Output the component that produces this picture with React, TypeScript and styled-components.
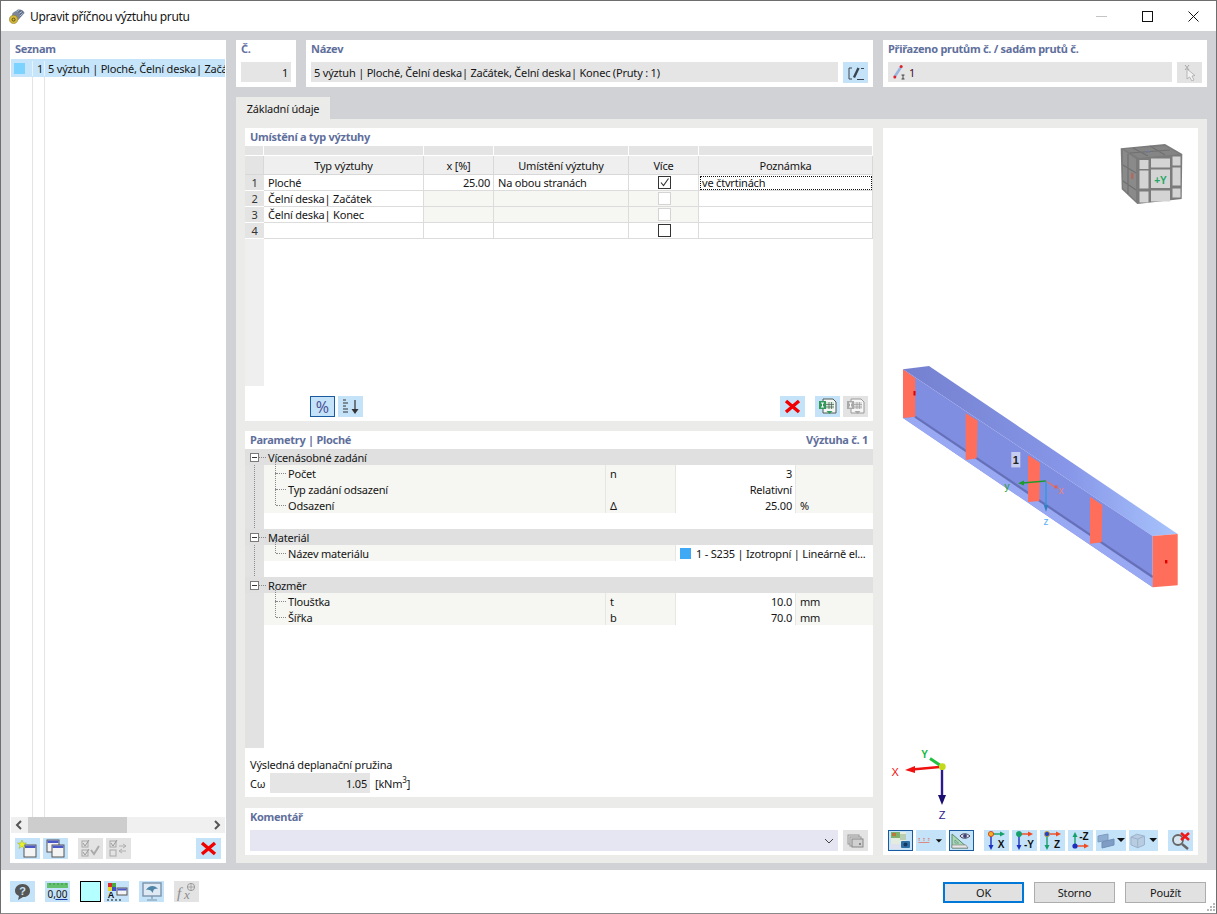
import { ReactNode } from 'react';
import styled, { createGlobalStyle } from 'styled-components';

const GlobalStyle = createGlobalStyle`
  html, body { margin: 0; padding: 0; background: #fff; }
  body { font-family: "Noto Sans", "Open Sans", sans-serif; font-size: 11px; letter-spacing: -0.2px; color: #151515; }
  * { box-sizing: border-box; }
`;

const Window = styled.div`
  width: 1217px;
  height: 914px;
  border: 1px solid #6e6e6e;
  border-bottom-color: #8a8a8a;
  display: flex;
  flex-direction: column;
  background: #fff;
  overflow: hidden;
`;
const TitleBar = styled.div`
  height: 30px;
  flex: none;
  display: flex;
  align-items: center;
  padding-left: 8px;
  gap: 5px;
  font-size: 12px;
  letter-spacing: -0.35px;
`;
const WinControls = styled.div`
  margin-left: auto;
  display: flex;
`;
const WinButton = styled.div`
  width: 46px;
  height: 30px;
  display: flex;
  align-items: center;
  justify-content: center;
`;
const Body = styled.div`
  flex: 1;
  min-height: 0;
  background: #d1d2d5;
  padding: 9px 9px 7px 9px;
  display: grid;
  grid-template-columns: 216px 971px;
  gap: 10px;
`;
const Card = styled.div<{ $w?: number; $h?: number }>`
  background: #fff;
  ${p => (p.$w ? `width: ${p.$w}px;` : '')}
  ${p => (p.$h ? `height: ${p.$h}px;` : '')}
  flex: none;
`;
const ListPanel = styled(Card)`
  display: flex;
  flex-direction: column;
`;
const SectionTitle = styled.div<{ $h?: number }>`
  height: ${p => p.$h ?? 18}px;
  padding: 0 5px 2px;
  display: flex;
  align-items: center;
  justify-content: space-between;
  color: #5f6f9c;
  font-weight: 700;
  font-size: 11px;
  letter-spacing: -0.28px;
`;
const List = styled.div`
  flex: 1;
  margin: 0 1px;
  background-image: linear-gradient(#e4e4e4, #e4e4e4), linear-gradient(#e4e4e4, #e4e4e4);
  background-size: 1px 100%, 1px 100%;
  background-position: 21px 0, 33px 0;
  background-repeat: no-repeat;
`;
const ListRow = styled.div`
  height: 18px;
  background: #c6e5fa;
  display: grid;
  grid-template-columns: 21px 12px 1fr;
  align-items: center;
  white-space: nowrap;
  overflow: hidden;
`;
const ListSwatch = styled.span`
  width: 11px;
  height: 11px;
  background: #7dd3ff;
  margin-left: 3px;
`;
const ListNo = styled.span`
  text-align: right;
  padding-right: 1px;
  border-left: 1px solid #e8f3fb;
`;
const ListText = styled.span`
  padding-left: 3px;
  border-left: 1px solid #e8f3fb;
  overflow: hidden;
`;
const ScrollBar = styled.div`
  height: 16px;
  margin: 0 1px;
  background: #f0f0f0;
  display: flex;
  align-items: center;
  justify-content: space-between;
  padding: 0 4px;
  position: relative;
`;
const ScrollThumb = styled.div`
  position: absolute;
  left: 17px;
  top: 0;
  width: 99px;
  height: 16px;
  background: #cdcdcd;
`;
const ListTools = styled.div`
  height: 30px;
  flex: none;
  padding: 5px 5px 0;
  display: flex;
  gap: 3px;
`;
const Main = styled.div`
  display: flex;
  flex-direction: column;
  min-height: 0;
`;
const TopRow = styled.div`
  display: flex;
  gap: 10px;
  height: 47px;
  flex: none;
`;
const FieldRow = styled.div`
  display: flex;
  padding: 4px 5px 0;
  gap: 5px;
`;
const ReadOnly = styled.div<{ $right?: boolean; $w?: number }>`
  height: 20px;
  flex: ${p => (p.$w ? 'none' : '1')};
  ${p => (p.$w ? `width: ${p.$w}px;` : '')}
  background: #e5e5e5;
  display: flex;
  align-items: center;
  justify-content: ${p => (p.$right ? 'flex-end' : 'flex-start')};
  padding: 0 3px;
  white-space: nowrap;
`;
const FieldIcon = styled.span`
  display: flex;
  margin: 0 4px 0 2px;
`;
const Maroon = styled.span`
  color: #4d0a2c;
`;
const Tab = styled.div`
  margin-top: 10px;
  width: 94px;
  height: 22px;
  flex: none;
  background: #ebebe9;
  display: flex;
  align-items: center;
  justify-content: center;
`;
const TabPanel = styled.div`
  flex: 1;
  min-height: 0;
  background: #ebebe9;
  padding: 9px 9px 8px;
  display: grid;
  grid-template-columns: 628px 315px;
  gap: 10px;
`;
const FormColumn = styled.div`
  display: flex;
  flex-direction: column;
`;
const TableRow = styled.div<{ $h: number }>`
  display: grid;
  grid-template-columns: 19px 160px 70px 135px 70px 174px;
  height: ${p => p.$h}px;
`;
const TopCell = styled.div`
  background: #e4e4e4;
  border-right: 1px solid #fff;
  margin-bottom: 1px;
`;
const HeadCell = styled.div<{ $corner?: boolean }>`
  background: ${p => (p.$corner ? '#e4e4e4' : '#efefef')};
  border-right: 1px solid #d8d8d8;
  border-bottom: 1px solid #d8d8d8;
  display: flex;
  align-items: center;
  justify-content: center;
`;
const RowHead = styled.div`
  background: #e4e4e4;
  border-bottom: 1px solid #fff;
  display: flex;
  align-items: center;
  justify-content: center;
  font-size: 11px;
  color: #333;
`;
const Cell = styled.div<{ $right?: boolean; $tint?: boolean; $center?: boolean }>`
  background: ${p => (p.$tint ? '#f6f7f2' : '#fff')};
  border-right: 1px solid #dcdcdc;
  border-bottom: 1px solid #dcdcdc;
  display: flex;
  align-items: center;
  justify-content: ${p => (p.$right ? 'flex-end' : p.$center ? 'center' : 'flex-start')};
  padding: 0 3px 0 4px;
  white-space: nowrap;
`;
const FocusCell = styled(Cell)`
  outline: 1px dotted #111;
  outline-offset: -2px;
  padding-left: 3px;
`;
const Check = styled.span<{ $disabled?: boolean }>`
  width: 13px;
  height: 13px;
  border: 1px solid ${p => (p.$disabled ? '#d4d4d4' : '#333')};
  background: #fff;
  display: flex;
  align-items: center;
  justify-content: center;
`;
const TableFiller = styled.div`
  width: 19px;
  height: 147px;
  background: #efefef;
`;
const TableTools = styled.div`
  display: flex;
  gap: 3px;
  padding: 10px 5px 0 65px;
`;
const Tree = styled.div`
  height: 299px;
  background: linear-gradient(to right, #e2e2e2 19px, transparent 19px);
  position: relative;
`;
const TreeSpine = styled.div<{ $top: number; $h: number }>`
  position: absolute;
  left: 9px;
  top: ${p => p.$top}px;
  height: ${p => p.$h}px;
  border-left: 1px dotted #8a8a8a;
`;
const GroupRow = styled.div`
  height: 16px;
  background: #e0e0e0;
  display: flex;
  align-items: center;
  padding-left: 5px;
  position: relative;
`;
const Expander = styled.span`
  width: 9px;
  height: 9px;
  border: 1px solid #7a7a7a;
  background: #fff;
  position: relative;
  margin-right: 9px;
  &::before {
    content: '';
    position: absolute;
    left: 1px;
    right: 1px;
    top: 3px;
    border-top: 1px solid #333;
  }
  &::after {
    content: '';
    position: absolute;
    left: 8px;
    width: 7px;
    top: 3px;
    border-top: 1px dotted #8a8a8a;
  }
`;
const ParamRow = styled.div`
  height: 16px;
  margin-left: 19px;
  display: grid;
  grid-template-columns: 341px 70px 120px 78px;
`;
const ParamLabel = styled.div`
  background: #f6f7f2;
  padding-left: 24px;
  position: relative;
  display: flex;
  align-items: center;
  &::before {
    content: '';
    position: absolute;
    left: 12px;
    width: 10px;
    top: 8px;
    border-top: 1px dotted #8a8a8a;
  }
  &::after {
    content: '';
    position: absolute;
    left: 11px;
    top: -8px;
    height: 16px;
    border-left: 1px dotted #8a8a8a;
  }
`;
const ParamCell = styled.div<{ $right?: boolean; $white?: boolean; $span?: number; $plain?: boolean }>`
  background: ${p => (p.$white ? '#fff' : '#f6f7f2')};
  border-left: ${p => (p.$plain ? '0' : '1px solid #e6e6e2')};
  display: flex;
  align-items: center;
  justify-content: ${p => (p.$right ? 'flex-end' : 'flex-start')};
  padding: 0 3px 0 4px;
  white-space: nowrap;
  overflow: hidden;
  ${p => (p.$span ? `grid-column: span ${p.$span};` : '')}
`;
const MaterialSwatch = styled.span`
  width: 11px;
  height: 11px;
  background: #3fa9f5;
  margin-right: 5px;
  flex: none;
`;
const TreeBlank = styled.div`
  height: 16px;
`;
const ResultBlock = styled.div`
  padding: 9px 5px 0;
`;
const ResultRow = styled.div`
  display: flex;
  align-items: center;
  margin-top: 1px;
  height: 20px;
`;
const ResultSymbol = styled.span`
  width: 20px;
`;
const Unit = styled.span`
  margin-left: 5px;
  sup { font-size: 8px; line-height: 0; }
`;
const CommentRow = styled.div`
  display: flex;
  gap: 5px;
  padding: 4px 5px 0;
`;
const Combo = styled.div`
  flex: 1;
  height: 21px;
  background: #e6e6f2;
  display: flex;
  align-items: center;
  justify-content: flex-end;
  padding-right: 4px;
`;
const PreviewCard = styled(Card)`
  display: flex;
  flex-direction: column;
`;
const Scene = styled.svg`
  display: block;
  width: 315px;
  height: 702px;
  flex: none;
`;
const PreviewTools = styled.div`
  display: flex;
  gap: 3px;
  padding: 0 5px;
`;
const Footer = styled.div`
  height: 43px;
  flex: none;
  display: flex;
  padding: 11px 10px 0 9px;
  position: relative;
`;
const FooterTools = styled.div`
  display: flex;
  gap: 10px;
`;
const DialogButtons = styled.div`
  margin-left: auto;
  display: flex;
  gap: 10px;
  padding-top: 1px;
`;
const DialogButton = styled.button<{ $primary?: boolean }>`
  width: 81px;
  height: 21px;
  padding: 0;
  font: inherit;
  letter-spacing: inherit;
  color: #151515;
  background: #e1e1e1;
  border: ${p => (p.$primary ? '2px solid #0078d7' : '1px solid #adadad')};
`;
const ColorBox = styled.div`
  width: 21px;
  height: 21px;
  border: 1px solid #000;
  background: #b4ffff;
  margin-right: -7px;
`;
const Grip = styled.svg`
  position: absolute;
  right: 1px;
  bottom: 1px;
`;
const ToolBtn = styled.button<{ $w?: number; $state?: 'on' | 'off' | 'active'; $gap?: number }>`
  width: ${p => p.$w ?? 25}px;
  height: 21px;
  flex: none;
  padding: 0;
  margin-left: ${p => p.$gap ?? 0}px;
  border: ${p => (p.$state === 'active' ? '1px solid #1a5a9e' : '0')};
  background: ${p => (p.$state === 'off' ? '#e3e3e3' : '#c5e3f8')};
  display: flex;
  align-items: center;
  justify-content: center;
  font-family: inherit;
`;
const PercentBtn = styled(ToolBtn)`
  font-size: 16px;
  line-height: 1;
  color: #50559a;
  letter-spacing: 0;
`;

const Svg = ({ children, w = 19, h = 17 }: { children: ReactNode; w?: number; h?: number }) => (
  <svg width={w} height={h} viewBox={`0 0 ${w} ${h}`}>
    {children}
  </svg>
);

const Caret = () => <polygon points="0,0 8,0 4,4" fill="#111" />;

const RedX = () => (
  <Svg>
    <path d="M3 3 L16 14 M16 3 L3 14" stroke="#f00000" strokeWidth="3.4" />
  </Svg>
);
const TitleIcon = () => (
  <Svg w={16} h={15}>
    <path d="M3 5 L9 0.5 C12 0 15 2 15.5 4 L10 10 Z" fill="#5d6d88" />
    <path d="M5 4.5 L10.5 1 M7 6.5 L13 2.5 M9 8.5 L14.5 4" stroke="#c4ced9" strokeWidth="0.9" />
    <ellipse cx="7" cy="7" rx="4" ry="4.6" fill="#7c8698" />
    <circle cx="4.6" cy="10.4" r="4.2" fill="#d6b93a" stroke="#8c7a2a" strokeWidth="0.6" />
    <circle cx="4.6" cy="10.6" r="1.5" fill="none" stroke="#5a4d18" strokeWidth="1" />
  </Svg>
);
const EditIcon = () => (
  <Svg>
    <path d="M6 4 H3 V15 H6" fill="none" stroke="#3a4450" strokeWidth="1" />
    <path d="M8 13.5 L12.5 4" stroke="#3a4450" strokeWidth="2.4" />
    <path d="M11 15.5 H18 M15 4.5 H18" stroke="#3a4450" strokeWidth="1" />
  </Svg>
);
const MemberIcon = () => (
  <Svg w={12} h={16}>
    <path d="M1.5 13 L8 3" stroke="#9ab4e0" strokeWidth="2.6" />
    <circle cx="1.8" cy="13" r="1.5" fill="#e0202a" />
    <circle cx="8.2" cy="2.6" r="1.5" fill="#e0202a" />
    <path d="M8.5 11 H11.5 M10 11 V15 M8.5 15 H11.5" stroke="#222" strokeWidth="0.8" />
  </Svg>
);
const PickIcon = () => (
  <Svg>
    <path d="M5 1 L9 6 M9 1 L5 6" stroke="#a8a8a8" strokeWidth="1" />
    <path d="M7 5 L7 15 L9.5 13 L12 17 L14 16 L12 12 L15 11.5 Z" fill="#f2f2f2" stroke="#aaa" strokeWidth="0.8" />
  </Svg>
);
const SortIcon = () => (
  <Svg>
    <path d="M2 2 H5 M2 5 H7 M2 8 H5 M2 11 H7 M2 14 H7" stroke="#333" strokeWidth="1" />
    <path d="M14 2 V12" stroke="#333" strokeWidth="1.2" />
    <polygon points="10.5,11 17.5,11 14,16" fill="#333" />
  </Svg>
);
const SheetIcon = ({ off }: { off?: boolean }) => {
  const edge = off ? '#9a9a9a' : '#4e5a52';
  const tab = off ? '#a8a8a8' : '#2f9a5a';
  return (
    <Svg>
      <path d="M5 1 H15 L18 4 V15 H5 Z" fill="#f6f6f6" stroke={edge} />
      <rect x="8" y="4" width="8" height="7" fill={off ? '#ddd' : '#cfe8d6'} />
      <path d="M8 6.5 H16 M8 9 H16 M11 4 V11 M13.5 4 V11" stroke={edge} strokeWidth="0.7" />
      <rect x="1" y="3" width="7" height="8" fill={tab} />
      <path d="M3 5 H6 M4.5 5 V9 M3 9 H6" stroke="#fff" strokeWidth="1" />
      <polygon points="8.5,13 14.5,13 11.5,16" fill={tab} />
    </Svg>
  );
};
const NewWinIcon = () => (
  <Svg w={21} h={19}>
    <rect x="7" y="6" width="12" height="12" fill="#f4f4f4" stroke="#555" />
    <rect x="7.5" y="6.5" width="11" height="2.5" fill="#4b58c8" />
    <polygon points="5,1 6.3,4 9.5,4 7,6 8,9.4 5,7.4 2,9.4 3,6 0.5,4 3.7,4" fill="#e6f02c" stroke="#8a9a20" strokeWidth="0.4" />
  </Svg>
);
const CopyWinIcon = () => (
  <Svg w={21} h={19}>
    <rect x="2" y="1" width="12" height="12" fill="#f4f4f4" stroke="#555" />
    <rect x="2.5" y="1.5" width="11" height="2.5" fill="#4b58c8" />
    <rect x="7" y="6" width="12" height="12" fill="#f4f4f4" stroke="#555" />
    <rect x="7.5" y="6.5" width="11" height="2.5" fill="#4b58c8" />
  </Svg>
);
const CheckListIcon = ({ alt }: { alt?: boolean }) => (
  <Svg w={21} h={19}>
    <rect x="2" y="2" width="6" height="6" fill="none" stroke="#a8a8a8" />
    <rect x="2" y="11" width="6" height="6" fill="none" stroke="#a8a8a8" />
    <path d="M3 4 L5 7 L9 1" fill="none" stroke="#999" />
    {alt ? (
      <path d="M11 7 H18 M11 12 H18 M15 5 L18 7 L15 9 M14 10 L11 12 L14 14" fill="none" stroke="#b0b0b0" />
    ) : (
      <>
        <path d="M3 13 L5 16 L9 10" fill="none" stroke="#999" />
        <path d="M11 11 L14 15 L19 7" fill="none" stroke="#aaa" strokeWidth="2" />
      </>
    )}
  </Svg>
);
const HelpIcon = () => (
  <svg width="19" height="18" viewBox="0 0 19 18">
    <path d="M9.5 1 C14 1 17 4 17 8 C17 12 14 14 10 14 L5 17 L6 13 C3.5 12 2 10 2 8 C2 4 5 1 9.5 1 Z" fill="#555" />
    <text x="9.5" y="12" fontSize="11" fontWeight="700" textAnchor="middle" fill="#c5e3f8" fontFamily="Liberation Sans">?</text>
  </svg>
);
const DecimalsIcon = () => (
  <svg width="23" height="19" viewBox="0 0 23 19">
    <rect x="1" y="1" width="21" height="5" fill="#63c06e" />
    <path d="M4 1 V3 M8 1 V3 M12 1 V3 M16 1 V3 M20 1 V3" stroke="#2f8a3f" strokeWidth="0.8" />
    <text x="11.5" y="15.5" fontSize="10" textAnchor="middle" fill="#111" fontFamily="Noto Sans">0,00</text>
    <path d="M9.5 17.5 H21.5" stroke="#1f3f9e" strokeWidth="1" />
  </svg>
);
const ColorsIcon = () => (
  <Svg w={23} h={19}>
    <rect x="3" y="1" width="4" height="4" fill="#d9262c" />
    <rect x="7" y="1" width="4" height="4" fill="#48a93f" />
    <rect x="3" y="5" width="4" height="4" fill="#e8d82a" />
    <rect x="7" y="5" width="4" height="4" fill="#3a4fc8" />
    <rect x="12" y="6" width="10" height="7" fill="#f4f4f4" stroke="#555" />
    <rect x="12.5" y="6.5" width="9" height="2" fill="#4b58c8" />
    <text x="6" y="16" fontSize="9" fontWeight="700" textAnchor="middle" fill="#111" fontFamily="Liberation Sans">A</text>
    <path d="M2 18 H4 M6 18 H8 M10 18 H12 M14 18 H16" stroke="#111" />
  </Svg>
);
const MonitorIcon = () => (
  <Svg w={23} h={19}>
    <rect x="3" y="1" width="18" height="13" fill="#dfe9f4" stroke="#7d93aa" strokeWidth="1.4" />
    <path d="M6 8 C9 3 15 3 18 7 C14 6 13 8 13 11 C11 8 9 7 6 8 Z" fill="#4f86a8" />
    <path d="M12 14 V17 M7 18 H17" stroke="#7d93aa" strokeWidth="1.2" />
  </Svg>
);
const FxIcon = () => (
  <svg width="23" height="19" viewBox="0 0 23 19">
    <text x="2" y="16" fontSize="15" fontStyle="italic" fill="#8c8c8c" fontFamily="Liberation Serif">f</text>
    <text x="9" y="17" fontSize="13" fontStyle="italic" fill="#8c8c8c" fontFamily="Liberation Serif">x</text>
    <circle cx="16" cy="5" r="3.6" fill="none" stroke="#9a9a9a" />
    <path d="M12.5 5 H19.5 M16 1.5 V8.5" stroke="#9a9a9a" strokeWidth="0.8" />
  </svg>
);
const ImageCamIcon = () => (
  <Svg w={23} h={19}>
    <rect x="2" y="1" width="15" height="13" fill="#e4ecdf" />
    <rect x="2" y="1" width="9" height="6" fill="#7fb06c" />
    <rect x="3" y="2" width="4" height="3" fill="#b8783c" />
    <rect x="11" y="3" width="6" height="6" fill="#b9cdb0" />
    <rect x="1" y="13" width="13" height="5" fill="#dde2ee" />
    <rect x="12" y="10" width="9" height="7" rx="1" fill="#2f6fa8" />
    <circle cx="16.5" cy="13.5" r="2" fill="#14395e" />
  </Svg>
);
const DimsDropIcon = () => (
  <Svg w={38} h={13}>
    <path d="M3 9 H17" stroke="#e0705c" strokeWidth="1" />
    <path d="M3 4 H5 M9 4 H11 M15 4 H17 M3 6 H5 M9 6 H11 M15 6 H17" stroke="#e0705c" strokeWidth="1" />
    <g transform="translate(25 5)"><Caret /></g>
  </Svg>
);
const RulerEyeIcon = () => (
  <Svg w={23} h={19}>
    <path d="M2 17 V3 L18 17 Z" fill="#a8d8b4" stroke="#5a8a6a" />
    <path d="M2 14 H16 L18 17 H2 Z" fill="#e8e8e8" stroke="#777" strokeWidth="0.6" />
    <path d="M5 12 V9 L8.5 12 Z" fill="#c5e3f8" stroke="#5a8a6a" strokeWidth="0.7" />
    <path d="M10 5 C12 2 17 2 20 5 C17 8 12 8 10 5 Z" fill="#dde" stroke="#445" />
    <circle cx="15" cy="5" r="1.9" fill="#3a3f78" />
  </Svg>
);
const AxisIcon = ({ label, from, to, arrowV, arrowH }: { label: string; from: string; to: string; arrowV: string; arrowH: string }) => (
  <svg width="23" height="19" viewBox="0 0 23 19">
    <path d="M6 3 H16" stroke={arrowH} strokeWidth="1.4" />
    <polygon points="15,0.5 20,3 15,5.5" fill={arrowH} />
    <path d="M6 3 V15" stroke={arrowV} strokeWidth="1.4" />
    <polygon points="3.5,14 8.5,14 6,19" fill={arrowV} />
    <circle cx="6" cy="3" r="2.6" fill={from} stroke={to} strokeWidth="0.8" />
    <text x="16" y="17" fontSize="10" fontWeight="700" textAnchor="middle" fill="#111" fontFamily="Liberation Sans">{label}</text>
  </svg>
);
const MinusZIcon = () => (
  <svg width="23" height="19" viewBox="0 0 23 19">
    <path d="M6 15 V5" stroke="#15a06a" strokeWidth="1.4" />
    <polygon points="3.5,6 8.5,6 6,1" fill="#15a06a" />
    <path d="M6 15 H16" stroke="#f0481f" strokeWidth="1.4" />
    <polygon points="15,12.5 20,15 15,17.5" fill="#f0481f" />
    <circle cx="6" cy="15" r="2.6" fill="#1c2fc0" />
    <text x="15" y="9" fontSize="10" fontWeight="700" textAnchor="middle" fill="#111" fontFamily="Liberation Sans">-Z</text>
  </svg>
);
const LayersIcon = () => (
  <Svg w={30} h={17}>
    <path d="M2 4 L12 2 V8 L2 10 Z" fill="#8fadd0" stroke="#7d9cc0" />
    <path d="M6 10 L18 7 V13 L6 16 Z" fill="#7f9dc4" stroke="#6f8fb8" />
    <g transform="translate(21 6)"><Caret /></g>
  </Svg>
);
const CubeIcon = () => (
  <Svg w={30} h={17}>
    <path d="M2 5 L8 2 L16 4 V13 L9 16 L2 13 Z" fill="#b8cde2" stroke="#9ab0c8" />
    <path d="M2 5 L9 7 L16 4 M9 7 V16" fill="none" stroke="#9ab0c8" />
    <g transform="translate(21 6)"><Caret /></g>
  </Svg>
);
const ZoomXIcon = () => (
  <Svg w={21} h={19}>
    <circle cx="8" cy="9" r="5" fill="#d8e6f0" stroke="#666" strokeWidth="1.8" />
    <path d="M12 13 L18 18" stroke="#666" strokeWidth="2.4" />
    <path d="M11 2 L19 9 M19 2 L11 9" stroke="#f01818" strokeWidth="2.6" />
  </Svg>
);
const TileIcon = () => (
  <Svg w={19} h={15}>
    <rect x="2" y="2" width="11" height="9" fill="#ddd" stroke="#999" />
    <rect x="4" y="4" width="11" height="9" fill="#ddd" stroke="#999" />
    <rect x="6" y="6" width="11" height="8" fill="#d0d0d0" stroke="#888" />
    <rect x="13" y="10" width="2" height="2" fill="#888" />
  </Svg>
);

const beamPlates = [
  '965.7,413.3 977.7,420.7 976.7,458.3 965.7,460',
  '1028,455 1040,462.7 1039.3,501 1028,502',
  '1090,496.7 1102.3,505 1101.7,542.3 1090,543.7',
];

const cubeTiles = [
  [1139.5, 160, 9, 9], [1151, 158.5, 19, 9], [1172.5, 156.5, 8, 9],
  [1139.5, 170.5, 9, 18], [1151, 169.5, 19, 18.5], [1172.5, 167.5, 8, 18],
  [1139.5, 191.5, 9, 11], [1151, 190.5, 19, 11], [1172.5, 188.5, 8, 9],
];

const ViewCube = () => (
  <g>
    <polygon points="1120.7,148.3 1165,144 1182.3,154 1181.7,199 1137.3,204 1121.7,189.3" fill="#7b7b7b" />
    <polygon points="1124,149 1165,146 1179,154 1139,158" fill="#858585" />
    <path d="M1133 148 L1148 156 M1150 146 L1165 155 M1130 153 L1170 150" stroke="#707070" strokeWidth="1.2" />
    <polygon points="1123,150 1136,159 1136,201 1123,188" fill="#8a8a8a" />
    <path d="M1128 154 V194 M1123 165 L1136 173 M1123 181 L1136 190" stroke="#707070" strokeWidth="1.2" />
    <rect x="1131" y="173" width="2.5" height="6" fill="#b06a60" />
    {cubeTiles.map(([x, y, w, h]) => (
      <rect key={`${x}-${y}`} x={x} y={y} width={w} height={h} fill="#d4d4d4" />
    ))}
    <text x="1160.5" y="184" fontSize="10" fontWeight="700" textAnchor="middle" fill="#22a866" fontFamily="Liberation Sans" letterSpacing="0">+Y</text>
    <rect x="1146" y="151" width="4" height="1.5" fill="#6e7898" />
  </g>
);

const Beam = () => (
  <g>
    <defs>
      <linearGradient id="beamTop" x1="0" y1="0" x2="1" y2="0">
        <stop offset="0" stopColor="#7480cf" />
        <stop offset="0.6" stopColor="#8796e8" />
        <stop offset="1" stopColor="#a8c4fc" />
      </linearGradient>
    </defs>
    <polygon points="903,369.3 929,366 1177.7,534 1152.7,536" fill="url(#beamTop)" />
    <polygon points="903,369.3 1152.7,536 1152.7,587.3 903,418" fill="#808ee2" />
    <polygon points="915,416.7 1152.7,576.7 1152.7,587.3 903,418" fill="#98a8f2" />
    <path d="M915 416.7 L1152.7 577" stroke="#6570b8" strokeWidth="2.2" />
    <polygon points="903,369.3 915.3,378.3 915.3,416.7 903,418" fill="#ff6e5a" />
    {beamPlates.map(p => <polygon key={p} points={p} fill="#ff6e5a" />)}
    <polygon points="1152.7,536 1177.7,534 1177.7,585.3 1152.7,587.3" fill="#ff6e5a" />
    <rect x="913.5" y="391" width="2" height="4.5" fill="#e00000" />
    <rect x="1165" y="560" width="2.4" height="3.4" fill="#e00000" />
    <rect x="1011.3" y="452" width="9" height="15.4" fill="#c6cdee" />
    <text x="1015.8" y="464" fontSize="11" fontWeight="700" textAnchor="middle" fill="#222" fontFamily="Liberation Sans">1</text>
    <path d="M1046 481 L1022 483" stroke="#1f9a2c" strokeWidth="1.6" />
    <polygon points="1018,483.3 1024,480.6 1024,485.6" fill="#1f9a2c" />
    <path d="M1046 481 L1055 487" stroke="#e87060" strokeWidth="1.4" />
    <rect x="1054.5" y="485.5" width="3" height="3" fill="#e0604f" />
    <path d="M1046 481 V507" stroke="#2f9ae0" strokeWidth="1.4" />
    <polygon points="1043.8,505 1048.2,505 1046,512" fill="#2f7fc0" />
    <text x="1007" y="490" fontSize="10" textAnchor="middle" fill="#1f9a2c" fontFamily="Liberation Sans">y</text>
    <text x="1061" y="494" fontSize="10" textAnchor="middle" fill="#f08070" fontFamily="Liberation Sans">x</text>
    <text x="1046" y="525" fontSize="10" textAnchor="middle" fill="#58b0f5" fontFamily="Liberation Sans">z</text>
  </g>
);

const GlobalAxes = () => (
  <g>
    <path d="M942.3 766.7 L912 769.5" stroke="#f01010" strokeWidth="2.4" />
    <polygon points="905,770 915,766 915,773" fill="#f01010" />
    <path d="M942.3 766.7 L930 758.5" stroke="#20c040" strokeWidth="3" />
    <path d="M942 767 V796" stroke="#2a1a8c" strokeWidth="2.4" />
    <polygon points="938,795 946,795 942,805" fill="#1a0f70" />
    <circle cx="942.3" cy="766.7" r="3.4" fill="#c4d81c" />
    <text x="895" y="776" fontSize="11" textAnchor="middle" fill="#f01010" fontFamily="Liberation Sans">X</text>
    <text x="924.5" y="758" fontSize="10" fontWeight="700" textAnchor="middle" fill="#10b840" fontFamily="Liberation Sans">Y</text>
    <text x="942" y="819" fontSize="11" textAnchor="middle" fill="#2a1a8c" fontFamily="Liberation Sans">Z</text>
  </g>
);

type Param = { label: string; sym?: string; value: ReactNode; unit?: string };

const ParamGroup = ({ title, rows }: { title: string; rows: Param[] }) => (
  <>
    <GroupRow>
      <Expander />
      {title}
    </GroupRow>
    {rows.map(r => (
      <ParamRow key={r.label}>
        <ParamLabel>{r.label}</ParamLabel>
        <ParamCell>{r.sym}</ParamCell>
        <ParamCell $right $white>{r.value}</ParamCell>
        <ParamCell>{r.unit}</ParamCell>
      </ParamRow>
    ))}
  </>
);

const tableRows = [
  { no: 1, type: 'Ploché', x: '25.00', place: 'Na obou stranách', note: 've čtvrtinách' },
  { no: 2, type: 'Čelní deska| Začátek', tint: true },
  { no: 3, type: 'Čelní deska| Konec', tint: true },
  { no: 4, type: '' },
];

export default function App() {
  return (
    <Window>
      <GlobalStyle />
      <TitleBar>
        <TitleIcon />
        Upravit příčnou výztuhu prutu
        <WinControls>
          <WinButton>
            <svg width="11" height="11"><path d="M0 5.5 H11" stroke="#c4c4c4" /></svg>
          </WinButton>
          <WinButton>
            <svg width="11" height="11"><rect x="0.5" y="0.5" width="10" height="10" fill="none" stroke="#111" /></svg>
          </WinButton>
          <WinButton>
            <svg width="11" height="11"><path d="M0.5 0.5 L10.5 10.5 M10.5 0.5 L0.5 10.5" stroke="#111" /></svg>
          </WinButton>
        </WinControls>
      </TitleBar>
      <Body>
        <ListPanel>
          <SectionTitle $h={19}>Seznam</SectionTitle>
          <List>
            <ListRow>
              <ListSwatch />
              <ListNo>1</ListNo>
              <ListText>5 výztuh | Ploché, Čelní deska| Začá</ListText>
            </ListRow>
          </List>
          <ScrollBar>
            <ScrollThumb />
            <svg width="8" height="10"><path d="M6 1 L2 5 L6 9" fill="none" stroke="#555" strokeWidth="2" /></svg>
            <svg width="8" height="10"><path d="M2 1 L6 5 L2 9" fill="none" stroke="#555" strokeWidth="2" /></svg>
          </ScrollBar>
          <ListTools>
            <ToolBtn><NewWinIcon /></ToolBtn>
            <ToolBtn><CopyWinIcon /></ToolBtn>
            <ToolBtn $state="off" $gap={7}><CheckListIcon /></ToolBtn>
            <ToolBtn $state="off"><CheckListIcon alt /></ToolBtn>
            <ToolBtn $gap={62}><RedX /></ToolBtn>
          </ListTools>
        </ListPanel>

        <Main>
          <TopRow>
            <Card $w={60}>
              <SectionTitle>Č.</SectionTitle>
              <FieldRow><ReadOnly $right>1</ReadOnly></FieldRow>
            </Card>
            <Card $w={567}>
              <SectionTitle>Název</SectionTitle>
              <FieldRow>
                <ReadOnly>5 výztuh | Ploché, Čelní deska| Začátek, Čelní deska| Konec (Pruty : 1)</ReadOnly>
                <ToolBtn><EditIcon /></ToolBtn>
              </FieldRow>
            </Card>
            <Card $w={324}>
              <SectionTitle>Přiřazeno prutům č. / sadám prutů č.</SectionTitle>
              <FieldRow>
                <ReadOnly><FieldIcon><MemberIcon /></FieldIcon><Maroon>1</Maroon></ReadOnly>
                <ToolBtn $state="off"><PickIcon /></ToolBtn>
              </FieldRow>
            </Card>
          </TopRow>
          <Tab>Základní údaje</Tab>
          <TabPanel>
            <FormColumn>
              <Card $h={293}>
                <SectionTitle>Umístění a typ výztuhy</SectionTitle>
                <TableRow $h={10}>
                  <TopCell /><TopCell /><TopCell /><TopCell /><TopCell /><TopCell />
                </TableRow>
                <TableRow $h={19}>
                  <HeadCell $corner />
                  <HeadCell>Typ výztuhy</HeadCell>
                  <HeadCell>x [%]</HeadCell>
                  <HeadCell>Umístění výztuhy</HeadCell>
                  <HeadCell>Více</HeadCell>
                  <HeadCell>Poznámka</HeadCell>
                </TableRow>
                {tableRows.map(r => (
                  <TableRow $h={16} key={r.no}>
                    <RowHead>{r.no}</RowHead>
                    <Cell>{r.type}</Cell>
                    <Cell $right $tint={r.tint}>{r.x}</Cell>
                    <Cell $tint={r.tint}>{r.place}</Cell>
                    <Cell $center $tint={r.tint}>
                      <Check $disabled={r.tint}>
                        {r.no === 1 && (
                          <svg width="11" height="11"><path d="M2 5.5 L4.5 8.5 L9.5 1.5" fill="none" stroke="#333" strokeWidth="1.1" /></svg>
                        )}
                      </Check>
                    </Cell>
                    {r.note ? <FocusCell>{r.note}</FocusCell> : <Cell />}
                  </TableRow>
                ))}
                <TableFiller />
                <TableTools>
                  <PercentBtn $state="active">%</PercentBtn>
                  <ToolBtn><SortIcon /></ToolBtn>
                  <ToolBtn $gap={414}><RedX /></ToolBtn>
                  <ToolBtn $gap={7}><SheetIcon /></ToolBtn>
                  <ToolBtn $state="off"><SheetIcon off /></ToolBtn>
                </TableTools>
              </Card>

              <Card $h={366} style={{ marginTop: 10 }}>
                <SectionTitle>
                  <span>Parametry | Ploché</span>
                  <span>Výztuha č. 1</span>
                </SectionTitle>
                <Tree>
                  <TreeSpine $top={13} $h={128} />
                  <ParamGroup
                    title="Vícenásobné zadání"
                    rows={[
                      { label: 'Počet', sym: 'n', value: '3' },
                      { label: 'Typ zadání odsazení', value: 'Relativní' },
                      { label: 'Odsazení', sym: 'Δ', value: '25.00', unit: '%' },
                    ]}
                  />
                  <TreeBlank />
                  <GroupRow><Expander />Materiál</GroupRow>
                  <ParamRow>
                    <ParamLabel>Název materiálu</ParamLabel>
                    <ParamCell $plain />
                    <ParamCell $white $span={2}>
                      <MaterialSwatch />1 - S235 | Izotropní | Lineárně el...
                    </ParamCell>
                  </ParamRow>
                  <TreeBlank />
                  <ParamGroup
                    title="Rozměr"
                    rows={[
                      { label: 'Tloušťka', sym: 't', value: '10.0', unit: 'mm' },
                      { label: 'Šířka', sym: 'b', value: '70.0', unit: 'mm' },
                    ]}
                  />
                </Tree>
                <ResultBlock>
                  Výsledná deplanační pružina
                  <ResultRow>
                    <ResultSymbol>Cω</ResultSymbol>
                    <ReadOnly $right $w={100}>1.05</ReadOnly>
                    <Unit>[kNm<sup>3</sup>]</Unit>
                  </ResultRow>
                </ResultBlock>
              </Card>

              <Card $h={47} style={{ marginTop: 11 }}>
                <SectionTitle>Komentář</SectionTitle>
                <CommentRow>
                  <Combo>
                    <svg width="10" height="6"><path d="M1 1 L5 5 L9 1" fill="none" stroke="#444" /></svg>
                  </Combo>
                  <ToolBtn $state="off"><TileIcon /></ToolBtn>
                </CommentRow>
              </Card>
            </FormColumn>

            <PreviewCard>
              <Scene viewBox="883 128 315 702">
                <ViewCube />
                <Beam />
                <GlobalAxes />
              </Scene>
              <PreviewTools>
                <ToolBtn $state="active"><ImageCamIcon /></ToolBtn>
                <ToolBtn $w={30} $state="on"><DimsDropIcon /></ToolBtn>
                <ToolBtn $state="active"><RulerEyeIcon /></ToolBtn>
                <ToolBtn $gap={7}><AxisIcon label="X" from="#f0b020" to="#d03020" arrowV="#1c2fc0" arrowH="#15a06a" /></ToolBtn>
                <ToolBtn><AxisIcon label="-Y" from="#15a06a" to="#15a06a" arrowV="#1c2fc0" arrowH="#f0481f" /></ToolBtn>
                <ToolBtn><AxisIcon label="Z" from="#2040d0" to="#d0a020" arrowV="#15a06a" arrowH="#f0481f" /></ToolBtn>
                <ToolBtn><MinusZIcon /></ToolBtn>
                <ToolBtn $w={30}><LayersIcon /></ToolBtn>
                <ToolBtn $w={29}><CubeIcon /></ToolBtn>
                <ToolBtn $gap={7}><ZoomXIcon /></ToolBtn>
              </PreviewTools>
            </PreviewCard>
          </TabPanel>
        </Main>
      </Body>
      <Footer>
        <FooterTools>
          <ToolBtn><HelpIcon /></ToolBtn>
          <ToolBtn><DecimalsIcon /></ToolBtn>
          <ColorBox />
          <ToolBtn><ColorsIcon /></ToolBtn>
          <ToolBtn><MonitorIcon /></ToolBtn>
          <ToolBtn $state="off"><FxIcon /></ToolBtn>
        </FooterTools>
        <DialogButtons>
          <DialogButton $primary>OK</DialogButton>
          <DialogButton>Storno</DialogButton>
          <DialogButton>Použít</DialogButton>
        </DialogButtons>
        <Grip width="10" height="10">
          <path d="M8 1 h2 v2 h-2z M5 4 h2 v2 h-2z M8 4 h2 v2 h-2z M2 7 h2 v2 h-2z M5 7 h2 v2 h-2z M8 7 h2 v2 h-2z" fill="#b8b8b8" />
        </Grip>
      </Footer>
    </Window>
  );
}
